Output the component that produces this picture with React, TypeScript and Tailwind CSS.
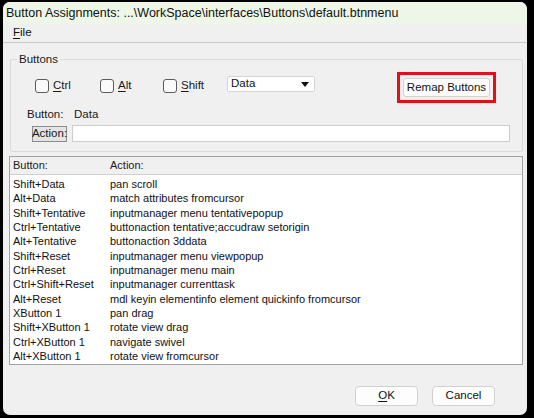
import React from "react";

const rows: [string, string][] = [
  ["Shift+Data", "pan scroll"],
  ["Alt+Data", "match attributes fromcursor"],
  ["Shift+Tentative", "inputmanager menu tentativepopup"],
  ["Ctrl+Tentative", "buttonaction tentative;accudraw setorigin"],
  ["Alt+Tentative", "buttonaction 3ddata"],
  ["Shift+Reset", "inputmanager menu viewpopup"],
  ["Ctrl+Reset", "inputmanager menu main"],
  ["Ctrl+Shift+Reset", "inputmanager currenttask"],
  ["Alt+Reset", "mdl keyin elementinfo element quickinfo fromcursor"],
  ["XButton 1", "pan drag"],
  ["Shift+XButton 1", "rotate view drag"],
  ["Ctrl+XButton 1", "navigate swivel"],
  ["Alt+XButton 1", "rotate view fromcursor"],
];

function Check({ label, hot, width }: { label: string; hot: number; width: string }) {
  return (
    <div className={`flex items-center mt-[5px] ${width}`}>
      <span className="w-[14px] h-[14px] rounded-[3px] border border-[#5c5c5c] bg-[#fafafa]" />
      <span className="ml-[4px] text-[11.5px] text-[#1a1a1a]">
        {label.split("").map((c, i) => (
          <span key={i} className={i === hot ? "underline underline-offset-[2px]" : ""}>
            {c}
          </span>
        ))}
      </span>
    </div>
  );
}

export default function App() {
  return (
    <div
      className="w-[534px] h-[418px] bg-black overflow-hidden pt-[2px] pl-[3px]"
      style={{ fontFamily: '"Liberation Sans", Arial, sans-serif' }}
    >
      <div className="w-[524px] h-[413px] rounded-[7px] bg-[#f0f0f0] overflow-hidden flex flex-col">
        {/* title bar */}
        <div className="h-[22px] bg-[#eef6e7] flex items-center pl-[3px] text-[12.5px] text-[#111]">
          Button Assignments: ...\WorkSpace\interfaces\Buttons\default.btnmenu
        </div>
        {/* menu */}
        <div className="h-[19px] border-b border-[#c9c9c9] flex items-center pl-[10px] text-[11.5px] text-[#111]">
          <span>
            <span className="underline underline-offset-[2px]">F</span>ile
          </span>
        </div>

        {/* group box */}
        <div className="relative mt-[16px] ml-[7px] mr-[4px] h-[93px] border border-[#dadada] rounded-[2px]">
          <span className="absolute -top-[8px] left-[6px] px-[2px] bg-[#f0f0f0] text-[11.5px] leading-[14px] text-[#1a1a1a]">
            Buttons
          </span>
          <div className="flex items-start pt-[12px] pl-[24px]">
            <Check label="Ctrl" hot={0} width="w-[65px]" />
            <Check label="Alt" hot={0} width="w-[63px]" />
            <Check label="Shift" hot={0} width="w-[64px]" />
            <div className="mt-[4px] w-[88px] h-[16px] bg-white border border-[#d4d4d4] rounded-[2px] flex items-center justify-between pl-[3px] pr-[5px] text-[11.5px] text-[#111]">
              <span>Data</span>
              <svg width="8" height="5" viewBox="0 0 8 5">
                <path d="M0 0H8L4 5Z" fill="#111" />
              </svg>
            </div>
            <div className="ml-[82px] w-[99px] h-[31px] border-[3px] border-[#e0111b] flex items-center justify-center">
              <div className="w-[87px] h-[19px] bg-[#fdfdfd] border border-[#d2d2d2] rounded-[3px] flex items-center justify-center text-[11.5px] text-[#111]">
                Remap Buttons
              </div>
            </div>
          </div>
          <div className="flex mt-[5px] pl-[16px] text-[11.5px] leading-[13px] text-[#1a1a1a]">
            <span className="w-[47px]">Button:</span>
            <span>Data</span>
          </div>
          <div className="flex items-center mt-[4px] pl-[21px]">
            <span className="h-[16px] w-[35px] border border-[#8c8c8c] bg-[#e4e4e4] flex items-center justify-center text-[11.5px] text-[#1a1a1a]">
              Action:
            </span>
            <span className="ml-[5px] h-[17px] w-[438px] bg-white border border-[#cdcdcd]" />
          </div>
        </div>

        {/* list */}
        <div className="mt-[4px] ml-[6px] mr-[4px] h-[209px] border border-[#a3a3a3] bg-white">
          <div className="h-[18px] bg-[#f0f0f0] border-b border-[#cfcfcf] flex items-center text-[11px] text-[#1a1a1a]">
            <span className="w-[100px] pl-[3px]">Button:</span>
            <span>Action:</span>
          </div>
          <div className="pt-[2px]">
            {rows.map(([b, a]) => (
              <div key={b} className="flex items-center h-[14.33px] text-[11px] text-[#111]">
                <span className="w-[100px] pl-[3px]">{b}</span>
                <span>{a}</span>
              </div>
            ))}
          </div>
        </div>

        {/* footer */}
        <div className="flex justify-end mt-[21px] pr-[32px] gap-[14px]">
          <button className="w-[63px] h-[20px] bg-[#fdfdfd] border border-[#d0d0d0] rounded-[4px] text-[11.5px] text-[#111]">
            <span className="underline underline-offset-[2px]">O</span>K
          </button>
          <button className="w-[63px] h-[20px] bg-[#fdfdfd] border border-[#d0d0d0] rounded-[4px] text-[11.5px] text-[#111]">
            Cancel
          </button>
        </div>
      </div>
    </div>
  );
}
